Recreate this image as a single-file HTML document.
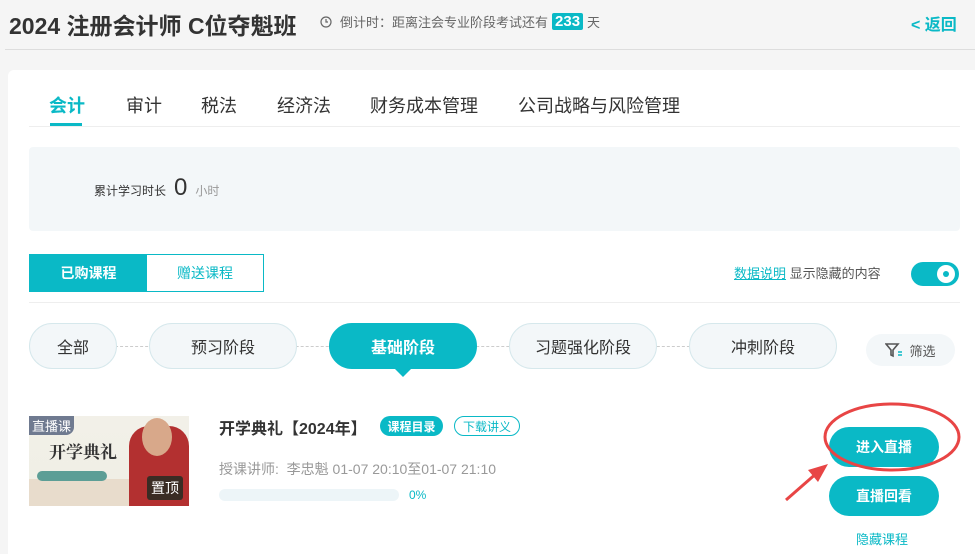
<!DOCTYPE html>
<html><head><meta charset="utf-8"><style>
*{margin:0;padding:0;box-sizing:border-box}
body{width:975px;height:554px;overflow:hidden;background:#f5f5f5;font-family:"Liberation Sans","Noto Sans CJK SC",sans-serif;position:relative;color:#333}
.a{position:absolute}
.t{color:#0ab9c6}
.pill{position:absolute;top:323px;height:46px;border-radius:23px;background:#f3f7f9;border:1px solid #d6e8ec;font-size:16px;color:#333;display:flex;align-items:center;justify-content:center}
.btn{position:absolute;left:829px;width:110px;height:40px;border-radius:20px;background:#0ab9c6;color:#fff;font-size:14px;font-weight:bold;display:flex;align-items:center;justify-content:center}
</style></head><body>
<div class="a" style="left:9px;top:7px;font-size:23px;font-weight:bold;color:#333">2024 注册会计师 C位夺魁班</div>
<div class="a" style="left:320px;top:12px;font-size:13px;color:#666;display:flex;align-items:center;gap:4px">
<svg width="12" height="12" viewBox="0 0 12 12"><circle cx="6" cy="6" r="5" fill="none" stroke="#666" stroke-width="1.2"/><path d="M6 3v3h2" fill="none" stroke="#666" stroke-width="1.2"/></svg>
<span style="margin-left:4px">倒计时：距离注会专业阶段考试还有</span><span style="background:#0ab9c6;color:#fff;font-weight:bold;font-size:15px;padding:0 3px;border-radius:2px">233</span><span>天</span></div>
<div class="a t" style="left:911px;top:11px;font-size:16px;font-weight:bold">&lt; 返回</div>
<div class="a" style="left:5px;top:49px;width:970px;height:1px;background:#ddd"></div>
<div class="a" style="left:8px;top:70px;width:967px;height:484px;background:#fff;border-radius:6px 0 0 0"></div>
<div class="a" style="left:49px;top:92px;font-size:18px;display:flex;gap:0;color:#333">
<span class="t" style="font-weight:bold;width:77px">会计</span><span style="width:75px">审计</span><span style="width:76px">税法</span><span style="width:93px">经济法</span><span style="width:148px">财务成本管理</span><span>公司战略与风险管理</span></div>
<div class="a" style="left:29px;top:126px;width:931px;height:1px;background:#eee"></div>
<div class="a" style="left:50px;top:123px;width:32px;height:3px;background:#0ab9c6"></div>
<div class="a" style="left:29px;top:147px;width:931px;height:84px;background:#f3f7f9;border-radius:4px"></div>
<div class="a" style="left:94px;top:174px;font-size:12px;color:#333;display:flex;align-items:baseline;gap:8px">累计学习时长 <span style="font-size:24px">0</span><span style="color:#999">小时</span></div>
<div class="a" style="left:29px;top:254px;width:235px;height:38px;border:1px solid #0ab9c6;display:flex;font-size:14px">
<div style="width:117px;background:#0ab9c6;color:#fff;font-weight:bold;display:flex;align-items:center;justify-content:center">已购课程</div>
<div class="t" style="flex:1;display:flex;align-items:center;justify-content:center">赠送课程</div></div>
<div class="a" style="left:734px;top:263px;font-size:13px;color:#555"><span class="t" style="text-decoration:underline">数据说明</span> 显示隐藏的内容</div>
<div class="a" style="left:911px;top:262px;width:48px;height:24px;border-radius:12px;background:#0ab9c6"><div style="position:absolute;right:4px;top:3px;width:18px;height:18px;border-radius:50%;background:#fff"><div style="position:absolute;left:6px;top:6px;width:6px;height:6px;border-radius:50%;background:#0ab9c6"></div></div></div>
<div class="a" style="left:29px;top:302px;width:931px;height:1px;background:#eee"></div>
<div class="a" style="left:100px;top:346px;width:620px;border-top:1px dashed #ccc"></div>
<div class="pill" style="left:29px;width:88px">全部</div>
<div class="pill" style="left:149px;width:148px">预习阶段</div>
<div class="pill" style="left:329px;width:148px;background:#0ab9c6;border-color:#0ab9c6;color:#fff;font-weight:bold">基础阶段</div>
<div class="a" style="left:394px;top:368px;width:0;height:0;border-left:9px solid transparent;border-right:9px solid transparent;border-top:9px solid #0ab9c6"></div>
<div class="pill" style="left:509px;width:148px">习题强化阶段</div>
<div class="pill" style="left:689px;width:148px">冲刺阶段</div>
<div class="a" style="left:866px;top:334px;width:89px;height:32px;border-radius:16px;background:#f3f7f9;font-size:13px;color:#555;display:flex;align-items:center;justify-content:center;gap:6px">
<svg width="18" height="16" viewBox="0 0 18 16"><path d="M1 2h12l-5 6v6l-2-1V8z" fill="none" stroke="#555" stroke-width="1.6"/><path d="M13 10h4M13 13h4" stroke="#0ab9c6" stroke-width="1.6"/></svg>筛选</div>
<div class="a" style="left:29px;top:416px;width:160px;height:90px;background:linear-gradient(#f2f0e8 0,#f0efe6 70%,#e8dccc 70%);overflow:hidden">
<div class="a" style="left:0;top:0;background:#6f7a90;color:#fff;font-size:13px;padding:0 3px;border-radius:0 0 8px 0">直播课</div>
<div class="a" style="left:20px;top:22px;font-size:17px;font-weight:bold;color:#333;font-family:'Noto Serif CJK SC',serif">开学典礼</div>
<div class="a" style="left:8px;top:55px;width:70px;height:10px;background:#5c9e96;border-radius:5px"></div>
<div class="a" style="left:100px;top:10px;width:60px;height:80px;background:#b33030;border-radius:20px 20px 0 0"></div>
<div class="a" style="left:113px;top:2px;width:30px;height:38px;background:#d8a88a;border-radius:50%"></div>
<div class="a" style="left:118px;top:60px;width:36px;height:24px;background:#3a2c24;color:#fff;font-size:14px;border-radius:3px;display:flex;align-items:center;justify-content:center">置顶</div></div>
<div class="a" style="left:219px;top:415px;font-size:16px;font-weight:bold;color:#333">开学典礼【2024年】</div>
<div class="a" style="left:380px;top:416px;width:63px;height:20px;border-radius:10px;background:#0ab9c6;color:#fff;font-size:12px;font-weight:bold;display:flex;align-items:center;justify-content:center">课程目录</div>
<div class="a t" style="left:454px;top:416px;width:66px;height:20px;border-radius:10px;border:1px solid #0ab9c6;font-size:12px;display:flex;align-items:center;justify-content:center">下载讲义</div>
<div class="a" style="left:219px;top:459px;font-size:14px;color:#999">授课讲师:&nbsp; 李忠魁 01-07 20:10至01-07 21:10</div>
<div class="a" style="left:219px;top:489px;width:180px;height:12px;border-radius:6px;background:#edf5f8"></div>
<div class="a t" style="left:409px;top:488px;font-size:12px">0%</div>
<div class="btn" style="top:427px">进入直播</div>
<div class="btn" style="top:476px">直播回看</div>
<div class="a t" style="left:856px;top:529px;font-size:13px">隐藏课程</div>
<svg class="a" style="left:780px;top:400px" width="190" height="110" viewBox="0 0 190 110"><ellipse cx="112" cy="37" rx="67" ry="33" fill="none" stroke="#e84545" stroke-width="3"/><path d="M6 100L38 72" stroke="#e84545" stroke-width="3"/><path d="M48 64L28 70L38 82Z" fill="#e84545"/></svg>
</body></html>
